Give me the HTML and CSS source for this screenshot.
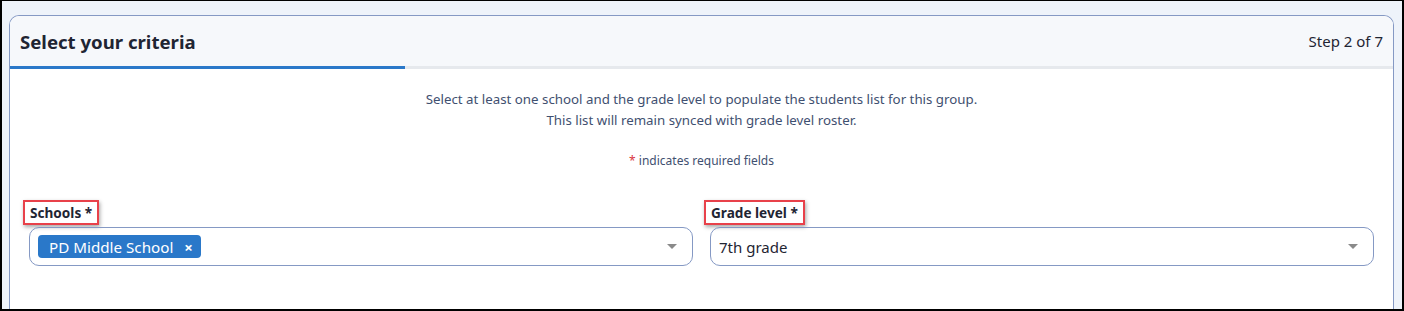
FILE: index.html
```html
<!DOCTYPE html>
<html lang="en">
<head>
    <meta charset="UTF-8">
    <meta name="viewport" content="width=device-width, initial-scale=1.0">
    <title>Select your criteria</title>
    <link rel="stylesheet" href="styles.css">
</head>
<body>
    <div class="frame">
        <div class="card">
            <div class="card-header">
                <h2 class="card-title">Select your criteria</h2>
                <span class="step">Step 2 of 7</span>
            </div>
            <div class="progress">
                <div class="progress-fill" style="width: 28.57%"></div>
            </div>
            <div class="card-body">
                <p class="intro">
                    Select at least one school and the grade level to populate the students list for this group.<br>
                    This list will remain synced with grade level roster.
                </p>
                <p class="required-note"><span class="star">*</span> indicates required fields</p>
                <div class="fields">
                    <div class="field">
                        <label class="field-label"><span class="marked">Schools *</span></label>
                        <div class="select">
                            <span class="tag">PD Middle School <span class="tag-remove">&times;</span></span>
                            <span class="caret"></span>
                        </div>
                    </div>
                    <div class="field">
                        <label class="field-label"><span class="marked">Grade level *</span></label>
                        <div class="select">
                            <span class="value">7th grade</span>
                            <span class="caret"></span>
                        </div>
                    </div>
                </div>
            </div>
        </div>
    </div>
</body>
</html>
```

FILE: styles.css
```css
body {
    margin: 0;
    font-family: "Noto Sans", "Open Sans", sans-serif;
    color: #1f2533;
}

.frame {
    box-sizing: border-box;
    height: 311px;
    border: 2px solid #000;
    border-top-width: 1px;
    background-color: #eef3fa;
    padding: 14px 8px 0 7px;
    overflow: hidden;
}

.card {
    height: 100%;
    background-color: #fff;
    border: 1px solid #8599c4;
    border-bottom: none;
    border-radius: 10px 10px 0 0;
    overflow: hidden;
}

.card-header {
    display: flex;
    align-items: center;
    justify-content: space-between;
    height: 50px;
    padding: 0 10px;
    background-color: #f6f8fb;
}

.card-title {
    margin: 0;
    font-size: 18.6px;
    font-weight: 700;
    color: #1f2533;
}

.step {
    font-size: 15px;
    color: #1f2533;
}

.progress {
    height: 3px;
    background-color: #e6e9ed;
}

.progress-fill {
    height: 100%;
    background-color: #2a78c9;
}

.card-body {
    padding: 20px 19px 0 19px;
}

.intro {
    margin: 0;
    text-align: center;
    font-size: 13.3px;
    line-height: 21px;
    color: #3f5070;
}

.required-note {
    margin: 20px 0 0;
    text-align: center;
    font-size: 12px;
    line-height: 20px;
    color: #3f5070;
}

.star {
    color: #d9363e;
}

.fields {
    display: grid;
    grid-template-columns: 1fr 1fr;
    gap: 17px;
    margin-top: 28px;
}

.field-label {
    display: block;
    height: 28px;
    padding-top: 1px;
    box-sizing: border-box;
}

.marked {
    display: inline-block;
    margin-left: -6px;
    padding: 0 5px;
    border: 2px solid #e8414a;
    box-shadow: 1px 2px 4px rgba(0, 0, 0, 0.35);
    font-size: 13.6px;
    font-weight: 700;
    line-height: 21px;
    color: #1f2533;
}

.select {
    position: relative;
    display: flex;
    align-items: center;
    box-sizing: border-box;
    height: 39px;
    padding: 0 8px;
    border: 1px solid #8599c4;
    border-radius: 10px;
}

.tag {
    display: inline-flex;
    align-items: center;
    height: 23px;
    padding: 0 8px 0 11px;
    border-radius: 4px;
    background-color: #2a78c9;
    color: #fff;
    font-size: 15.2px;
}

.tag-remove {
    margin-left: 11px;
    font-size: 15px;
    font-weight: 700;
}

.value {
    font-size: 15px;
    color: #1f2533;
}

.caret {
    position: absolute;
    right: 15px;
    top: 16px;
    width: 0;
    height: 0;
    border-left: 5px solid transparent;
    border-right: 5px solid transparent;
    border-top: 5px solid #8a8a8a;
}
```
